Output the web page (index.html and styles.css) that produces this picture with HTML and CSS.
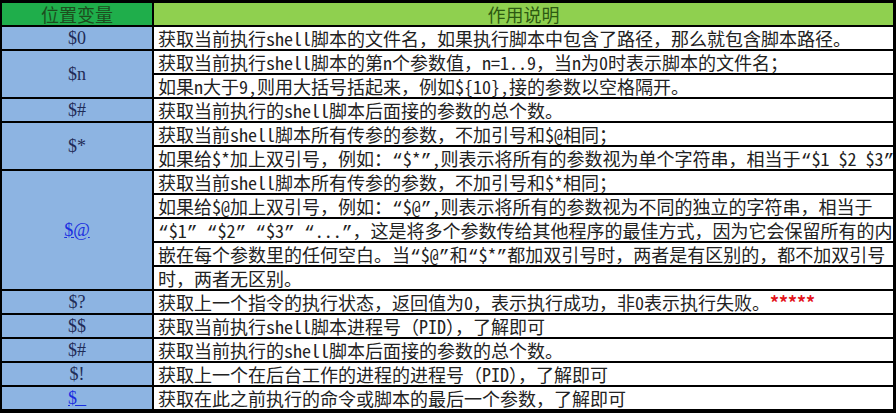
FILE: index.html
```html
<!DOCTYPE html>
<html lang="zh-CN">
<head>
<meta charset="utf-8">
<title>位置变量</title>
<link rel="stylesheet" href="styles.css">
</head>
<body>
<div class="sheet">
  <div class="hd hd-left">位置变量</div>
  <div class="hd hd-right">作用说明</div>

  <div class="var">$0</div>
  <div class="desc">获取当前执行shell脚本的文件名，如果执行脚本中包含了路径，那么就包含脚本路径。</div>

  <div class="var span2">$n</div>
  <div class="desc">获取当前执行shell脚本的第n个参数值，n=1..9，当n为0时表示脚本的文件名；</div>
  <div class="desc">如果n大于9,则用大括号括起来，例如${10},接的参数以空格隔开。</div>

  <div class="var">$#</div>
  <div class="desc">获取当前执行的shell脚本后面接的参数的总个数。</div>

  <div class="var span2">$*</div>
  <div class="desc">获取当前shell脚本所有传参的参数，不加引号和$@相同；</div>
  <div class="desc">如果给$*加上双引号，例如：<span class="q">“</span>$*<span class="q">”</span>,则表示将所有的参数视为单个字符串，相当于<span class="q">“</span>$1 $2 $3<span class="q">”</span></div>

  <div class="var span5"><span class="link">$@</span></div>
  <div class="desc">获取当前shell脚本所有传参的参数，不加引号和$*相同；</div>
  <div class="desc">如果给$@加上双引号，例如：<span class="q">“</span>$@<span class="q">”</span>,则表示将所有的参数视为不同的独立的字符串，相当于</div>
  <div class="desc"><span class="q">“</span>$1<span class="q">”</span> <span class="q">“</span>$2<span class="q">”</span> <span class="q">“</span>$3<span class="q">”</span> <span class="q">“</span>...<span class="q">”</span>，这是将多个参数传给其他程序的最佳方式，因为它会保留所有的内</div>
  <div class="desc">嵌在每个参数里的任何空白。当<span class="q">“</span>$@<span class="q">”</span>和<span class="q">“</span>$*<span class="q">”</span>都加双引号时，两者是有区别的，都不加双引号</div>
  <div class="desc">时，两者无区别。</div>

  <div class="var">$?</div>
  <div class="desc">获取上一个指令的执行状态，返回值为0，表示执行成功，非0表示执行失败。<span class="stars">*****</span></div>

  <div class="var">$$</div>
  <div class="desc">获取当前执行shell脚本进程号（PID），了解即可</div>

  <div class="var">$#</div>
  <div class="desc">获取当前执行的shell脚本后面接的参数的总个数。</div>

  <div class="var">$!</div>
  <div class="desc">获取上一个在后台工作的进程的进程号（PID），了解即可</div>

  <div class="var"><span class="link">$_</span></div>
  <div class="desc">获取在此之前执行的命令或脚本的最后一个参数，了解即可</div>
</div>
</body>
</html>
```
FILE: styles.css
```css
html, body {
  margin: 0;
  padding: 0;
  background: #ffffff;
}

.sheet {
  width: 896px;
  height: 413px;
  box-sizing: border-box;
  display: grid;
  grid-template-columns: 150px 1fr;
  grid-auto-rows: 22px;
  gap: 2px;
  padding: 3px 3px 4px 2px;
  background: #000000;
}

.hd {
  font-family: "Noto Sans CJK SC", sans-serif;
  font-size: 18px;
  line-height: 22px;
  text-align: center;
  color: #1d4d1d;
}

.hd-left {
  background: #1fae4b;
}

.hd-right {
  background: #8fd04f;
  color: #2d5a12;
}

.var {
  background: #8db4e2;
  color: #1f2c57;
  font-family: "Liberation Serif", "Noto Sans CJK SC", serif;
  font-size: 18px;
  display: flex;
  align-items: center;
  justify-content: center;
}

.span2 {
  grid-row: span 2;
}

.span5 {
  grid-row: span 5;
}

.link {
  color: #1a2ee0;
  text-decoration: underline;
}

.desc {
  background: #ffffff;
  color: #222222;
  font-family: "Noto Sans Mono CJK SC", "Noto Sans CJK SC", monospace;
  font-size: 18px;
  line-height: 22px;
  padding-left: 4px;
  white-space: nowrap;
  min-width: 0;
}

.q {
  font-family: "Liberation Mono", monospace;
}

.stars {
  color: #e4141b;
  font-weight: bold;
}
```
